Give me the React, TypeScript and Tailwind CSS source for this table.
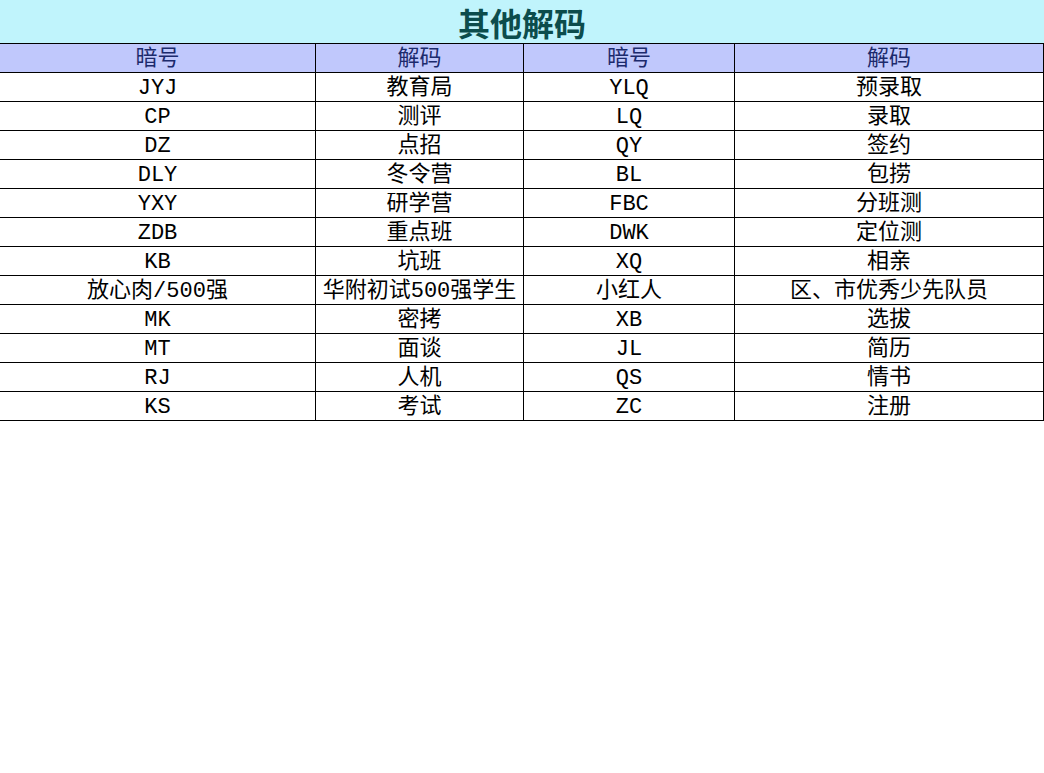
import React from 'react';

const rows: [string, string, string, string][] = [
  ['JYJ', '教育局', 'YLQ', '预录取'],
  ['CP', '测评', 'LQ', '录取'],
  ['DZ', '点招', 'QY', '签约'],
  ['DLY', '冬令营', 'BL', '包捞'],
  ['YXY', '研学营', 'FBC', '分班测'],
  ['ZDB', '重点班', 'DWK', '定位测'],
  ['KB', '坑班', 'XQ', '相亲'],
  ['放心肉/500强', '华附初试500强学生', '小红人', '区、市优秀少先队员'],
  ['MK', '密拷', 'XB', '选拔'],
  ['MT', '面谈', 'JL', '简历'],
  ['RJ', '人机', 'QS', '情书'],
  ['KS', '考试', 'ZC', '注册'],
];

const font = { fontFamily: '"Liberation Mono", "Noto Sans CJK SC", monospace' };

const cellCls = [
  'w-[316px] border-r border-black',
  'w-[208px] border-r border-black',
  'w-[211px] border-r border-black',
  'w-[309px] border-r border-black',
];

const App = () => {
  return (
    <div className="w-[1044px] h-[773px] bg-white" style={font}>
      <div className="h-[44px] bg-[#c0f4fc] border-b border-black flex items-center justify-center">
        <span
          className="text-[32px] font-bold text-[#0c4c4c] leading-[40px]"
          style={{ fontFamily: '"Noto Sans CJK SC", sans-serif' }}
        >
          其他解码
        </span>
      </div>

      <div className="flex h-[29px] bg-[#c0c8fc] border-b border-black text-[22px] text-[#1c2a6c]">
        {['暗号', '解码', '暗号', '解码'].map((t, i) => (
          <div key={i} className={`${cellCls[i]} flex items-center justify-center leading-none pt-[4px]`}>
            {t}
          </div>
        ))}
      </div>

      {rows.map((r, ri) => (
        <div key={ri} className="flex h-[29px] border-b border-black text-[22px] text-black">
          {r.map((t, i) => (
            <div key={i} className={`${cellCls[i]} flex items-center justify-center leading-none whitespace-nowrap pt-[4px]`}>
              {t}
            </div>
          ))}
        </div>
      ))}
    </div>
  );
};

export default App;
